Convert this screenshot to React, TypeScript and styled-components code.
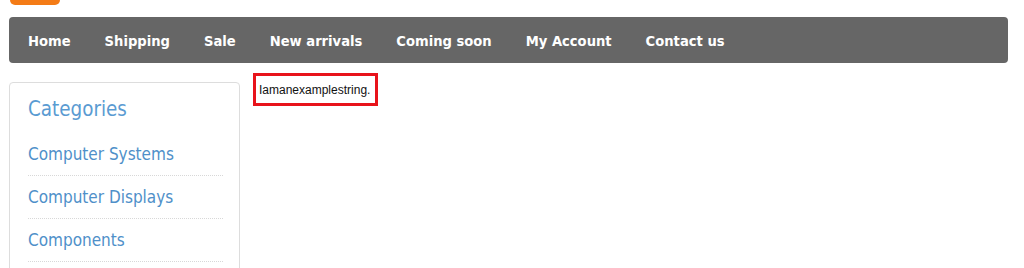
import styled, { createGlobalStyle } from "styled-components";

const GlobalStyle = createGlobalStyle`
  html, body {
    margin: 0;
    padding: 0;
    background: #ffffff;
  }
  body {
    font-family: "DejaVu Sans", "Liberation Sans", sans-serif;
  }
`;

const navItems = [
  "Home",
  "Shipping",
  "Sale",
  "New arrivals",
  "Coming soon",
  "My Account",
  "Contact us",
];

const categories = ["Computer Systems", "Computer Displays", "Components"];

function App() {
  return (
    <Page>
      <GlobalStyle />
      <TopTab />
      <NavBar>
        {navItems.map((item) => (
          <NavLink key={item}>{item}</NavLink>
        ))}
      </NavBar>
      <Body>
        <Sidebar>
          <SidebarTitle>Categories</SidebarTitle>
          <CategoryList>
            {categories.map((c) => (
              <CategoryItem key={c}>{c}</CategoryItem>
            ))}
          </CategoryList>
        </Sidebar>
        <Content>
          <ExampleBox>Iamanexamplestring.</ExampleBox>
        </Content>
      </Body>
    </Page>
  );
}

const Page = styled.div`
  width: 1024px;
  height: 268px;
  overflow: hidden;
  padding: 0 16px 0 9px;
  box-sizing: border-box;
`;

const TopTab = styled.div`
  width: 50px;
  height: 5px;
  margin-left: 1px;
  background: #f47b16;
  border-radius: 0 0 6px 6px;
`;

const NavBar = styled.nav`
  margin-top: 12px;
  height: 46px;
  background: #666666;
  border-radius: 4px;
  display: flex;
  align-items: center;
  gap: 34px;
  padding-left: 19px;
`;

const NavLink = styled.a`
  color: #ffffff;
  font-family: "DejaVu Sans Condensed", "DejaVu Sans", sans-serif;
  font-weight: bold;
  font-size: 14.6px;
  cursor: pointer;
`;

const Body = styled.div`
  display: flex;
  align-items: flex-start;
  gap: 13px;
`;

const Sidebar = styled.aside`
  margin-top: 19px;
  width: 231px;
  height: 240px;
  box-sizing: border-box;
  border: 1px solid #dddddd;
  border-radius: 4px;
  padding: 14px 16px 0 18px;
`;

const SidebarTitle = styled.h2`
  margin: 0 0 12px;
  font-family: "DejaVu Sans Condensed", "DejaVu Sans", sans-serif;
  font-weight: normal;
  font-size: 20.4px;
  color: #5a9bd2;
`;

const CategoryList = styled.ul`
  list-style: none;
  margin: 0;
  padding: 0;
`;

const CategoryItem = styled.li`
  font-family: "DejaVu Sans Condensed", "DejaVu Sans", sans-serif;
  font-size: 17px;
  color: #4f90c9;
  line-height: 20px;
  padding: 11px 0 11px;
  border-bottom: 1px dotted #d8d8d8;
  cursor: pointer;
`;

const Content = styled.main`
  margin-top: 10px;
`;

const ExampleBox = styled.div`
  height: 33px;
  width: 125px;
  box-sizing: border-box;
  border: 3px solid #e8131b;
  display: flex;
  align-items: center;
  padding-left: 3px;
  font-family: "Liberation Sans", Arial, sans-serif;
  font-size: 12px;
  color: #111111;
`;

export default App;
